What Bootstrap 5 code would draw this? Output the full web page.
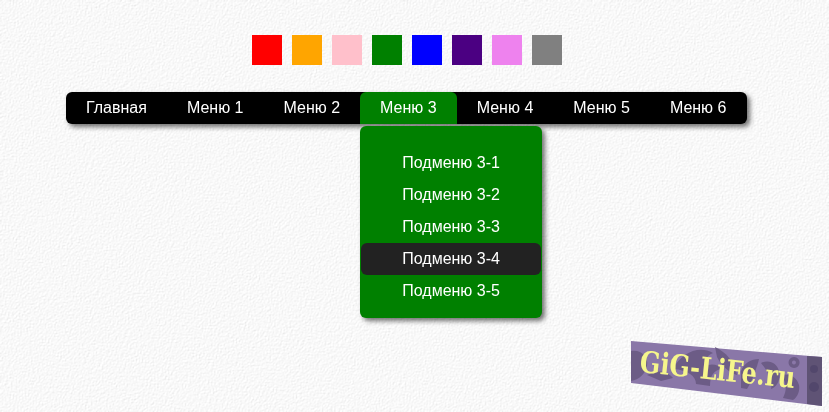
<!DOCTYPE html>
<html lang="ru">
<head>
    <meta charset="UTF-8">
    <meta name="viewport" content="width=device-width, initial-scale=1.0">
    <title>Меню</title>
    <link href="https://cdn.jsdelivr.net/npm/bootstrap@5.3.2/dist/css/bootstrap.min.css" rel="stylesheet">
    <style>
        html, body {
            height: 412px;
            overflow: hidden;
        }
        body {
            font-family: "Liberation Sans", Arial, sans-serif;
            font-size: 16px;
            background: #f5f5f5;
        }
        .paper-bg {
            position: fixed;
            top: 0;
            left: 0;
            width: 829px;
            height: 412px;
        }
        .page-wrap {
            position: relative;
            width: 813px;
            padding-top: 35px;
        }
        .swatches {
            gap: 10px;
            margin-bottom: 27px;
        }
        .swatch {
            width: 30px;
            height: 30px;
        }
        .s-red { background: #f00; }
        .s-orange { background: #ffa500; }
        .s-pink { background: #ffc0cb; }
        .s-green { background: #008000; }
        .s-blue { background: #00f; }
        .s-indigo { background: #4b0082; }
        .s-violet { background: #ee82ee; }
        .s-gray { background: #808080; }
        .main-menu {
            width: 681px;
            height: 32px;
            background: #000;
            border-radius: 6px;
            box-shadow: 3px 3px 5px rgba(0, 0, 0, .55);
        }
        .main-menu .nav-link {
            color: #fff;
            line-height: 32px;
            padding: 0 20px;
            white-space: nowrap;
        }
        .main-menu .nav-item.is-open {
            position: relative;
        }
        .main-menu .is-open > .nav-link {
            background: #008000;
            border-radius: 6px 6px 0 0;
        }
        .sub-menu {
            position: absolute;
            top: 34px;
            left: 0;
            width: 182px;
            margin: 0;
            padding: 21px 1px 11px;
            background: #008000;
            border: 0;
            border-radius: 6px;
            box-shadow: 3px 3px 5px rgba(0, 0, 0, .55);
            list-style: none;
        }
        .sub-menu a {
            display: block;
            height: 32px;
            line-height: 32px;
            text-align: center;
            color: #fff;
            text-decoration: none;
            border-radius: 6px;
        }
        .sub-menu a.is-hover {
            background: #222;
        }
        .site-logo {
            position: fixed;
            left: 631px;
            top: 341px;
            width: 191px;
            height: 65px;
        }
        .site-logo text {
            font-family: "DejaVu Serif", "Liberation Serif", serif;
            font-weight: 700;
            font-size: 30px;
            fill: #f6f68c;
        }
    </style>
</head>
<body>
    <svg class="paper-bg" xmlns="http://www.w3.org/2000/svg" aria-hidden="true">
        <filter id="paper" x="0" y="0" width="100%" height="100%">
            <feTurbulence type="fractalNoise" baseFrequency="0.65" numOctaves="3" seed="4" result="n"/>
            <feDiffuseLighting in="n" lighting-color="#ffffff" surfaceScale="0.5" diffuseConstant="1.07">
                <feDistantLight azimuth="45" elevation="62"/>
            </feDiffuseLighting>
        </filter>
        <rect width="829" height="412" filter="url(#paper)"/>
    </svg>

    <div class="page-wrap">
        <div class="swatches d-flex justify-content-center">
            <div class="swatch s-red"></div>
            <div class="swatch s-orange"></div>
            <div class="swatch s-pink"></div>
            <div class="swatch s-green"></div>
            <div class="swatch s-blue"></div>
            <div class="swatch s-indigo"></div>
            <div class="swatch s-violet"></div>
            <div class="swatch s-gray"></div>
        </div>

        <ul class="main-menu nav flex-nowrap mx-auto">
            <li class="nav-item"><a class="nav-link" href="#">Главная</a></li>
            <li class="nav-item"><a class="nav-link" href="#">Меню 1</a></li>
            <li class="nav-item"><a class="nav-link" href="#">Меню 2</a></li>
            <li class="nav-item is-open">
                <a class="nav-link" href="#">Меню 3</a>
                <ul class="sub-menu">
                    <li><a href="#">Подменю 3-1</a></li>
                    <li><a href="#">Подменю 3-2</a></li>
                    <li><a href="#">Подменю 3-3</a></li>
                    <li><a class="is-hover" href="#">Подменю 3-4</a></li>
                    <li><a href="#">Подменю 3-5</a></li>
                </ul>
            </li>
            <li class="nav-item"><a class="nav-link" href="#">Меню 4</a></li>
            <li class="nav-item"><a class="nav-link" href="#">Меню 5</a></li>
            <li class="nav-item"><a class="nav-link" href="#">Меню 6</a></li>
        </ul>
    </div>

    <svg class="site-logo" viewBox="0 0 191 65" xmlns="http://www.w3.org/2000/svg">
        <polygon points="0,0 191,16 191,65 0,42" fill="#8a77a8"/>
        <polygon points="176,15 191,16 191,65 176,63" fill="#5f5375"/>
        <g fill="#6c5c86">
            <path d="M0 10c10-2 18 6 16 15-1 7-8 14-16 15z"/>
            <path d="M16 34c10-6 20-4 26 3l-12 3z"/>
            <path d="M42 28c8-16 26-24 40-16-6 2-9 8-9 14 6-4 14-3 18 2-8 1-12 6-12 17l-14-2c0-8-8-14-23-15z"/>
            <path d="M84 6c10 5 20 14 22 28-8-2-16-10-20-18z"/>
            <path d="M110 30c3-8 10-12 18-12-2 8-6 20-12 30l-6-1z"/>
            <path d="M130 22c8-4 16 0 18 8s-2 16-8 18c2-8-2-16-10-26z"/>
            <path d="M150 34c8-2 16 2 18 10 1 5-1 12-6 15l-10-2c4-8 4-15-2-23z"/>
            <path d="M163 16a5.500 5.500 0 1 0 .1 0zm0 3.500a2 2 0 1 1-.1 0z" fill-rule="evenodd"/>
        </g>
        <g fill="#50456a" opacity=".8">
            <circle cx="183" cy="28" r="4"/>
            <circle cx="183" cy="46" r="5"/>
        </g>
        <text transform="translate(8 31) rotate(5.900) scale(.8 1)">GiG-LiFe.ru</text>
    </svg>

    <script src="https://cdn.jsdelivr.net/npm/bootstrap@5.3.2/dist/js/bootstrap.bundle.min.js"></script>
</body>
</html>
